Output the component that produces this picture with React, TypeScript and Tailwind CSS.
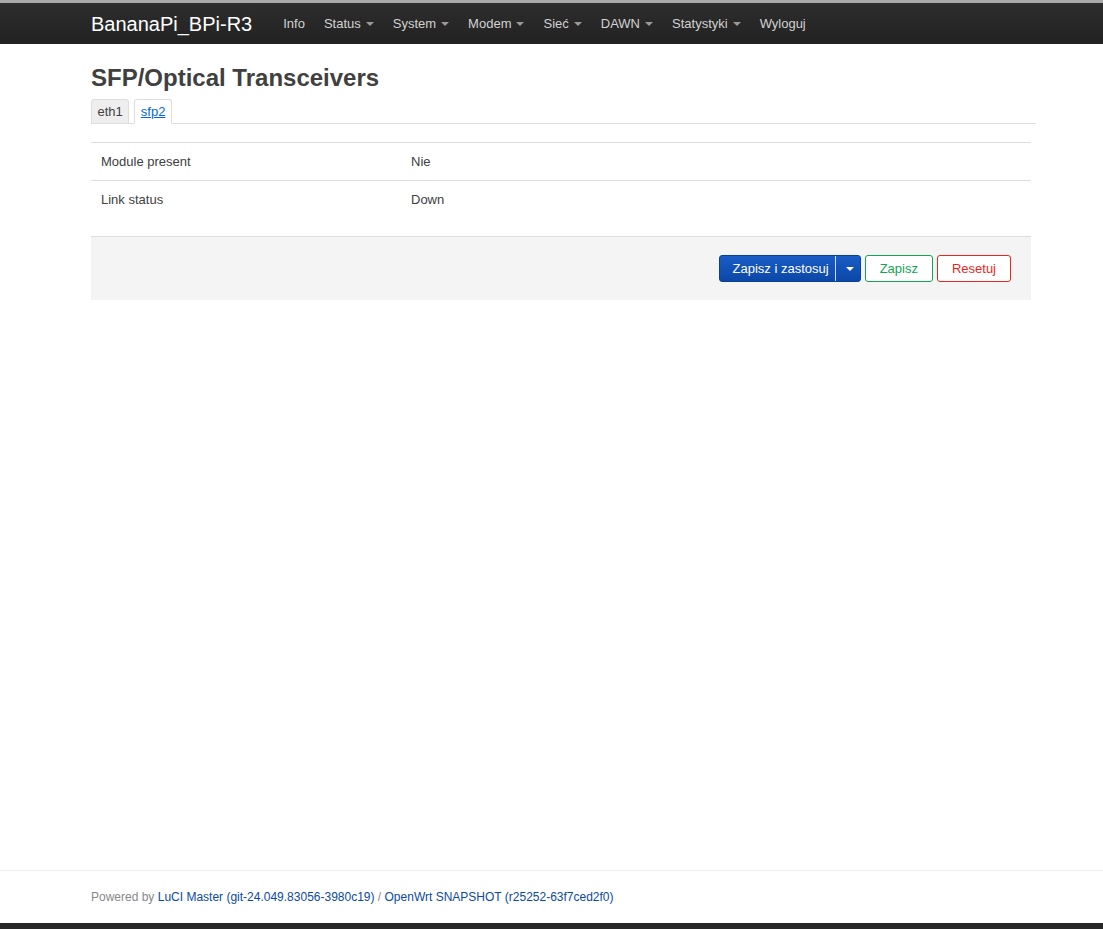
const navItems = [
  { label: "Info", caret: false },
  { label: "Status", caret: true },
  { label: "System", caret: true },
  { label: "Modem", caret: true },
  { label: "Sieć", caret: true },
  { label: "DAWN", caret: true },
  { label: "Statystyki", caret: true },
  { label: "Wyloguj", caret: false },
];

const rows = [
  { name: "Module present", value: "Nie" },
  { name: "Link status", value: "Down" },
];

function Caret({ className }: { className: string }) {
  return (
    <span
      className={
        "ml-[5px] inline-block h-0 w-0 border-x-[4px] border-t-[4px] border-x-transparent " +
        className
      }
    />
  );
}

export default function App() {
  return (
    <div className="flex min-h-[929px] flex-col bg-white font-['Liberation_Sans',Arial,sans-serif] text-[13px] text-[#404040]">

      <header className="h-[44px] border-t-[3px] border-[#a9a9a9] bg-[#262626] bg-gradient-to-b from-[#2d2d2d] to-[#222222]">
        <div className="ml-[91px] flex h-[41px] items-center">

          <span className="text-[20px] leading-none text-white">
            BananaPi_BPi-R3
          </span>

          <nav className="ml-[31px] flex items-center gap-[19px]">
            {navItems.map((item) => (
              <span
                key={item.label}
                className="flex items-center text-[13px] text-[#d2d2d2]"
              >
                {item.label}
                {item.caret && (
                  <Caret className="mt-[1px] border-t-[#9a9a9a]" />
                )}
              </span>
            ))}
          </nav>

        </div>
      </header>

      <main className="ml-[91px] w-[945px] flex-1">

        <h1 className="mt-[20px] text-[24px] font-bold leading-[28px] text-[#404040]">
          SFP/Optical Transceivers
        </h1>

        <div className="mt-[7px] flex items-end gap-[5px] border-b border-[#dddddd]">
          <span className="-mb-px rounded-t-[3px] border border-[#dddddd] bg-[#eeeeee] px-[5.5px] pb-[3px] pt-[4px] text-[13px] leading-[16px] text-[#404040]">
            eth1
          </span>
          <span className="-mb-px rounded-t-[3px] border border-b-white border-[#dddddd] bg-white px-[5.5px] pb-[3px] pt-[4px] text-[13px] leading-[16px] text-[#0069d6] underline">
            sfp2
          </span>
        </div>

        <div className="w-[940px]">

          <div className="mt-[18px] border-t border-[#dddddd]">
            {rows.map((row) => (
              <div
                key={row.name}
                className="flex h-[38px] items-center border-b border-[#dddddd] last:border-b-0"
              >
                <span className="w-[320px] pl-[10px]">
                  {row.name}
                </span>
                <span>
                  {row.value}
                </span>
              </div>
            ))}
          </div>

          <div className="mt-[17px] flex h-[64px] items-center justify-end gap-[4px] border-t border-[#dddddd] bg-[#f4f4f4] pr-[20px]">

            <div className="flex h-[27px] overflow-hidden rounded-[3px] border border-[#0a3f98] bg-gradient-to-b from-[#1a5dc6] to-[#0b47a7] text-white">
              <span className="flex items-center pl-[13px] pr-[6px]">
                Zapisz i zastosuj
              </span>
              <span className="flex w-[25px] items-center justify-center border-l border-white/80">
                <Caret className="ml-0 border-x-[3px] border-t-[3px] border-t-white" />
              </span>
            </div>

            <span className="flex h-[27px] items-center rounded-[3px] border border-[#11a752] bg-white px-[14px] text-[#11a752]">
              Zapisz
            </span>

            <span className="flex h-[27px] items-center rounded-[3px] border border-[#e8261c] bg-white px-[14px] text-[#e8261c]">
              Resetuj
            </span>

          </div>

        </div>

      </main>

      <footer className="flex h-[53px] items-center border-t border-[#eeeeee]">
        <p className="ml-[91px] text-[12px] text-[#888888]">
          Powered by{" "}
          <span className="text-[#0b4a9e]">
            LuCI Master (git-24.049.83056-3980c19)
          </span>
          {" / "}
          <span className="text-[#0b4a9e]">
            OpenWrt SNAPSHOT (r25252-63f7ced2f0)
          </span>
        </p>
      </footer>

      <div className="h-[6px] bg-[#272727]" />

    </div>
  );
}
